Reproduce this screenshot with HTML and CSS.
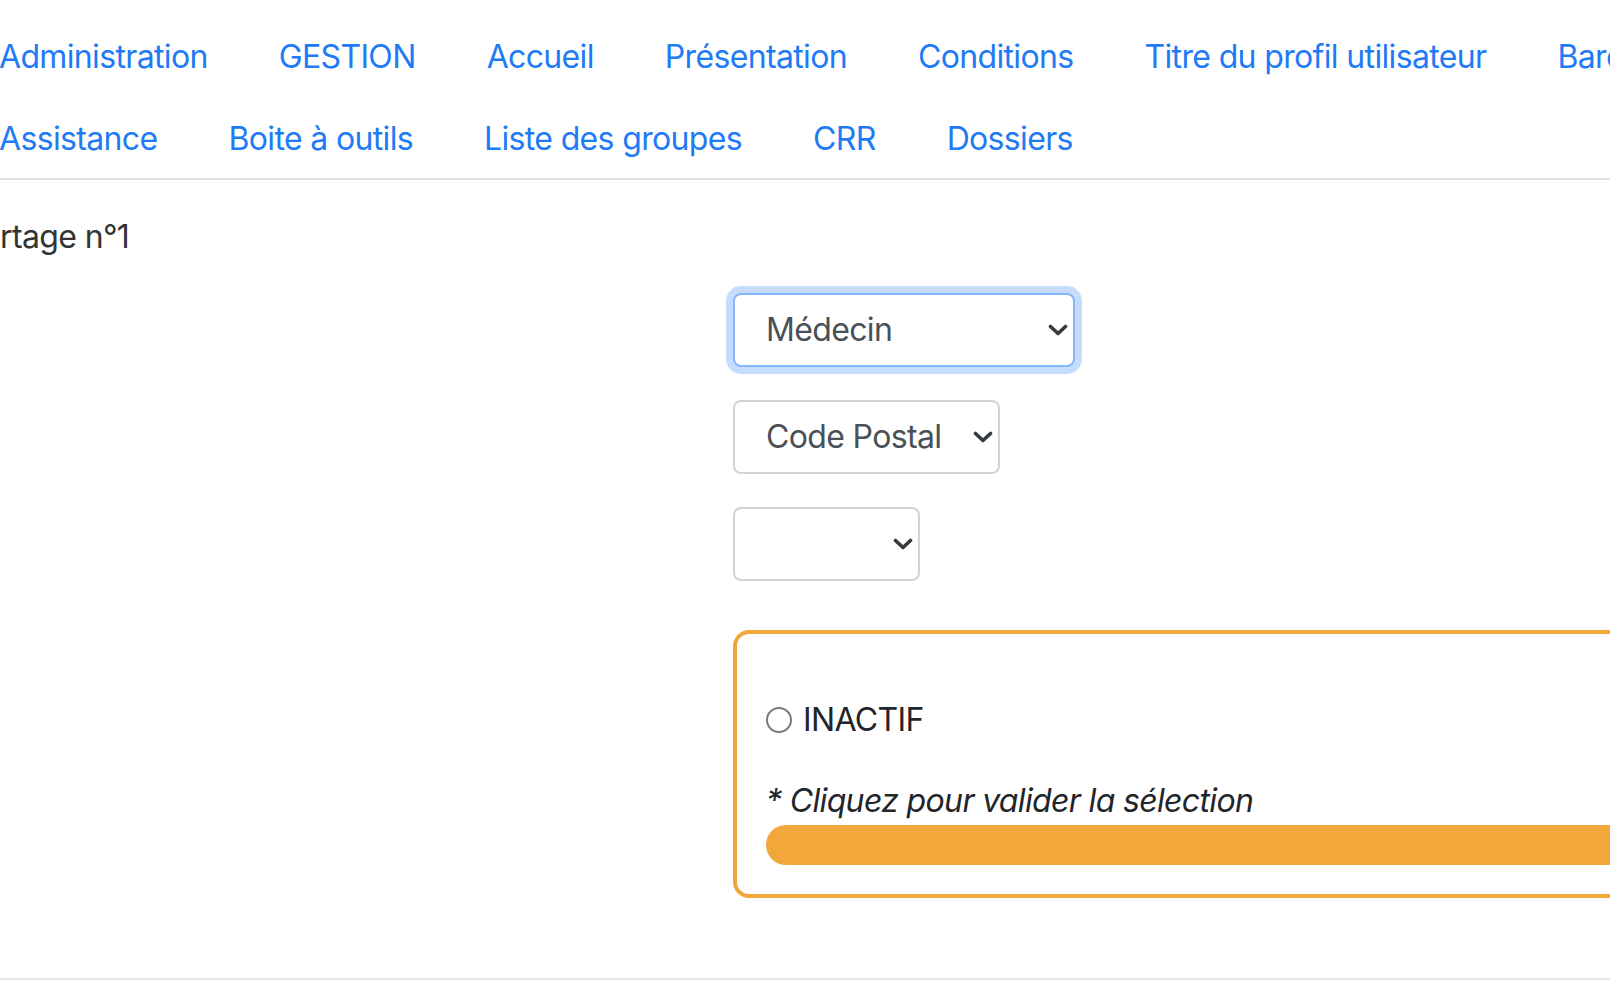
FILE: index.html
```html
<!DOCTYPE html>
<html lang="fr">
<head>
<meta charset="utf-8">
<title>Partage</title>
<link rel="stylesheet" href="styles.css">
</head>
<body>
<nav class="topnav">
  <ul class="nav-row">
    <li><a class="nav-link" href="#">Administration</a></li>
    <li><a class="nav-link" href="#">GESTION</a></li>
    <li><a class="nav-link" href="#">Accueil</a></li>
    <li><a class="nav-link" href="#">Présentation</a></li>
    <li><a class="nav-link" href="#">Conditions</a></li>
    <li><a class="nav-link" href="#">Titre du profil utilisateur</a></li>
    <li><a class="nav-link" href="#">Barème</a></li>
  </ul>
  <ul class="nav-row">
    <li><a class="nav-link" href="#">Assistance</a></li>
    <li><a class="nav-link" href="#">Boite à outils</a></li>
    <li><a class="nav-link" href="#">Liste des groupes</a></li>
    <li><a class="nav-link" href="#">CRR</a></li>
    <li><a class="nav-link" href="#">Dossiers</a></li>
  </ul>
</nav>
<main class="content">
  <h2 class="share-title">Partage n°1</h2>
  <form class="form-grid">
    <div class="label-col"></div>
    <div class="field-col">
      <div class="select-wrap">
        <select class="form-select w-medecin is-focused"><option>Médecin</option></select>
        <svg class="chev" viewBox="0 0 20 12"><polyline points="2.5,2.5 10,9.5 17.5,2.5"/></svg>
      </div>
      <div class="select-wrap">
        <select class="form-select w-code"><option>Code Postal</option></select>
        <svg class="chev" viewBox="0 0 20 12"><polyline points="2.5,2.5 10,9.5 17.5,2.5"/></svg>
      </div>
      <div class="select-wrap">
        <select class="form-select w-empty"><option></option></select>
        <svg class="chev" viewBox="0 0 20 12"><polyline points="2.5,2.5 10,9.5 17.5,2.5"/></svg>
      </div>
      <div class="status-box">
        <div class="status-spacer"></div>
        <label class="radio-row"><input class="radio" type="radio" name="etat"><span>INACTIF</span></label>
        <p class="hint">* Cliquez pour valider la sélection</p>
        <button class="validate-bar" type="button"></button>
      </div>
    </div>
  </form>
</main>
<hr class="bottom-rule">
</body>
</html>
```
FILE: styles.css
```css
html, body {
  margin: 0;
  padding: 0;
  overflow: hidden;
  background: #fff;
}
body {
  width: 1610px;
  height: 992px;
  font-family: Inter, "Helvetica Neue", Arial, sans-serif;
  font-size: 32px;
  line-height: 48px;
  letter-spacing: -0.65px;
  color: #212529;
}
.topnav {
  padding: 33px 0 15px;
  border-bottom: 2px solid #dee2e6;
}
.nav-row {
  list-style: none;
  margin: 0 0 0 -1px;
  padding: 0;
  display: flex;
  gap: 71px;
  white-space: nowrap;
}
.nav-row + .nav-row {
  margin-top: 34px;
}
.nav-link {
  color: #1f7af5;
  text-decoration: none;
}
.share-title {
  font-size: 32px;
  font-weight: 400;
  line-height: 48px;
  margin: 33px 0 0 -37px;
  color: #333;
  white-space: nowrap;
}
.form-grid {
  display: grid;
  grid-template-columns: 733px 1000px;
  margin-top: 32px;
}
.field-col {
  display: flex;
  flex-direction: column;
  align-items: flex-start;
  gap: 33px;
}
.select-wrap {
  position: relative;
}
.form-select {
  appearance: none;
  -webkit-appearance: none;
  font: inherit;
  letter-spacing: inherit;
  height: 74px;
  box-sizing: border-box;
  border: 2px solid #ced4da;
  border-radius: 8px;
  padding: 0 40px 0 31px;
  color: #495057;
  background: #fff;
  display: block;
}
.form-select.is-focused {
  border-color: #86b7fe;
  box-shadow: 0 0 0 7px #c6dcfd;
  outline: none;
}
.w-medecin { width: 342px; }
.w-code { width: 267px; }
.w-empty { width: 187px; }
.chev {
  position: absolute;
  right: 7px;
  top: 50%;
  margin-top: -6px;
  width: 20px;
  height: 12px;
  pointer-events: none;
  fill: none;
  stroke: #343a40;
  stroke-width: 3.6;
  stroke-linecap: round;
  stroke-linejoin: round;
}
.status-box {
  margin-top: 16px;
  width: 1000px;
  box-sizing: border-box;
  border: 4px solid #f1a73a;
  border-radius: 16px;
  padding: 29px;
}
.status-spacer {
  height: 33px;
}
.radio-row {
  display: flex;
  align-items: center;
  gap: 11px;
  height: 48px;
  color: #212529;
}
.radio {
  appearance: none;
  -webkit-appearance: none;
  margin: 0;
  width: 26px;
  height: 26px;
  box-sizing: border-box;
  border: 2px solid #7a7a7a;
  border-radius: 50%;
  background: #fff;
}
.hint {
  margin: 33px 0 0;
  font-style: italic;
  line-height: 48px;
  color: #212529;
  white-space: nowrap;
}
.validate-bar {
  display: block;
  width: 100%;
  height: 40px;
  border: 0;
  border-radius: 20px;
  background: #f1a73a;
  padding: 0;
}
.bottom-rule {
  margin: 80px 0 0;
  border: 0;
  border-top: 2px solid #e6e6e6;
  height: 0;
}
```
